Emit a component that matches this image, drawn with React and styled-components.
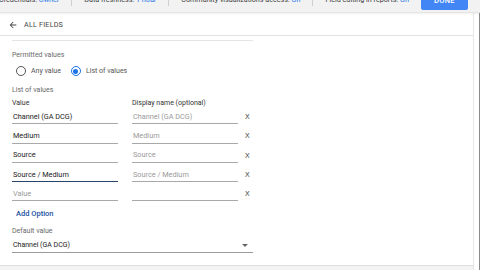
import React from "react";
import styled, { createGlobalStyle } from "styled-components";

const Global = createGlobalStyle`
  html, body { margin: 0; padding: 0; background: #fff; overflow: hidden; }
  body { font-family: Roboto, "Noto Sans", Arial, sans-serif; }
  * { box-sizing: border-box; }
`;

const Page = styled.div`
  width: 480px;
  height: 270px;
  display: flex;
  flex-direction: column;
  overflow: hidden;
`;

const TopBar = styled.div`
  height: 25px;
  margin-top: -12px;
  flex: none;
  background: #f2f2f2;
  border-bottom: 1px solid #e4e4e4;
  box-shadow: 0 1px 2px rgba(0,0,0,0.06);
  display: flex;
  align-items: center;
  font-size: 7.2px;
  color: #3c3c3c;
  position: relative;
  z-index: 1;
`;

const Info = styled.div`
  flex: none;
  padding: 0 12px;
  white-space: nowrap;
  border-left: ${p => (p.$first ? "none" : "1px solid #cfcfcf")};
  margin-left: ${p => (p.$first ? "-13px" : "0")};
  line-height: 12px;
`;

const Val = styled.span`
  color: #1a73e8;
`;

const DoneButton = styled.button`
  flex: none;
  margin-left: auto;
  margin-right: 14px;
  width: 47px;
  height: 20px;
  border: none;
  border-radius: 2px;
  background: #4285f4;
  color: #fff;
  font-family: inherit;
  font-size: 7.5px;
  font-weight: 500;
  letter-spacing: 0.3px;
  padding: 0;
`;

const Body = styled.div`
  flex: 1;
  display: flex;
  min-height: 0;
`;

const Main = styled.div`
  width: 474px;
  border-right: 1px solid #e6e6e6;
  display: flex;
  flex-direction: column;
`;

const Gutter = styled.div`
  flex: 1;
  border-right: 1px solid #8a8a8a;
`;

const FieldsHeader = styled.div`
  height: 23px;
  flex: none;
  border-bottom: 1px solid #e2e2e2;
  display: flex;
  align-items: center;
  gap: 6px;
  padding-left: 8px;
  padding-top: 1px;
  font-size: 7.2px;
  color: #444;
  letter-spacing: 0.2px;
`;

const Form = styled.div`
  flex: 1;
  width: 241px;
  margin-left: 12px;
  margin-top: 4px;
  border-top: 1px solid #e4e4e4;
  display: flex;
  flex-direction: column;
`;

const SectionLabel = styled.div`
  font-size: 7px;
  color: #6a6a6a;
  height: 10px;
  line-height: 10px;
  margin-top: ${p => p.$mt || 0}px;
`;

const RadioRow = styled.div`
  display: flex;
  align-items: center;
  gap: 10px;
  margin-top: 5px;
  margin-left: 4px;
  height: 12px;
`;

const RadioOption = styled.label`
  display: flex;
  align-items: center;
  gap: 5px;
  font-size: 7px;
  color: #555;
`;

const RadioCircle = styled.span`
  width: 10px;
  height: 10px;
  border-radius: 50%;
  border: 1.3px solid ${p => (p.$on ? "#1a73e8" : "#555")};
  display: flex;
  align-items: center;
  justify-content: center;
  &::after {
    content: "";
    width: 5px;
    height: 5px;
    border-radius: 50%;
    background: ${p => (p.$on ? "#1a73e8" : "transparent")};
  }
`;

const Grid = styled.div`
  display: grid;
  grid-template-columns: 106px 106px 14px;
  column-gap: 14px;
  margin-top: 3px;
`;

const ColHead = styled.div`
  font-size: 7px;
  color: #333;
  height: 7px;
  line-height: 10px;
`;

const Cell = styled.div`
  height: 19.3px;
  display: flex;
  align-items: center;
  font-size: 7.3px;
  color: ${p => (p.$muted ? "#9a9a9a" : "#222")};
  border-bottom: ${p => (p.$focus ? "1.5px solid #27446a" : "1px solid #a8a8a8")};
  padding: 4px 1px 0;
  white-space: nowrap;
`;

const Remove = styled.div`
  height: 19.3px;
  display: flex;
  align-items: center;
  padding-top: 4px;
  font-family: "Liberation Sans", Arial, sans-serif;
  font-size: 7px;
  color: #3a3a3a;
  margin-left: -7px;
`;

const AddOption = styled.div`
  font-size: 7.5px;
  color: #1a4f9e;
  font-weight: 500;
  margin-top: 7px;
  margin-left: 4px;
  height: 12px;
  line-height: 12px;
`;

const Select = styled.div`
  width: 241px;
  height: 14px;
  display: flex;
  align-items: center;
  justify-content: space-between;
  border-bottom: 1px solid #9a9a9a;
  font-size: 7px;
  color: #222;
  padding: 0 5px 1px 1px;
  margin-top: 3px;
`;

const Caret = styled.span`
  width: 0;
  height: 0;
  border-left: 3px solid transparent;
  border-right: 3px solid transparent;
  border-top: 3px solid #666;
`;

const Footer = styled.div`
  height: 5px;
  flex: none;
  background: #f3f3f3;
  border-top: 1px solid #dedede;
`;

const rows = [
  { v: "Channel (GA DCG)", d: "Channel (GA DCG)" },
  { v: "Medium", d: "Medium" },
  { v: "Source", d: "Source" },
  { v: "Source / Medium", d: "Source / Medium", focus: true },
  { v: "Value", d: "", muted: true },
];

export default function App() {
  return (
    <Page>
      <Global />
      <TopBar>
        <Info $first>Credentials: <Val>Owner</Val></Info>
        <Info>Data freshness: <Val>1 hour</Val></Info>
        <Info>Community visualizations access: <Val>On</Val></Info>
        <Info>Field editing in reports: <Val>On</Val></Info>
        <DoneButton>DONE</DoneButton>
      </TopBar>
      <Body>
        <Main>
          <FieldsHeader>
            <svg width="10" height="10" viewBox="0 0 24 24">
              <path d="M20 11H7.83l5.59-5.59L12 4l-8 8 8 8 1.41-1.41L7.83 13H20v-2z" fill="#444" />
            </svg>
            ALL FIELDS
          </FieldsHeader>
          <Form>
            <SectionLabel $mt={9}>Permitted values</SectionLabel>
            <RadioRow>
              <RadioOption><RadioCircle />Any value</RadioOption>
              <RadioOption><RadioCircle $on />List of values</RadioOption>
            </RadioRow>
            <SectionLabel $mt={8}>List of values</SectionLabel>
            <Grid>
              <ColHead>Value</ColHead>
              <ColHead>Display name (optional)</ColHead>
              <div />
              {rows.map((r, i) => (
                <React.Fragment key={i}>
                  <Cell $focus={r.focus} $muted={r.muted}>{r.v}</Cell>
                  <Cell $muted>{r.d}</Cell>
                  <Remove>X</Remove>
                </React.Fragment>
              ))}
            </Grid>
            <AddOption>Add Option</AddOption>
            <SectionLabel $mt={6}>Default value</SectionLabel>
            <Select>
              Channel (GA DCG)
              <Caret />
            </Select>
          </Form>
          <Footer />
        </Main>
        <Gutter />
      </Body>
    </Page>
  );
}
